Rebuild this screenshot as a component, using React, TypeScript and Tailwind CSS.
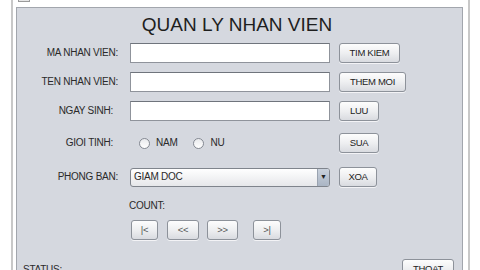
import React from "react";

const btn =
  "h-[20px] flex items-center justify-center rounded-[3px] border border-[#8d929a] bg-gradient-to-b from-[#fdfdfd] via-[#eeeff1] to-[#d9dbe0] text-[9.5px] tracking-[-0.3px] text-[#222] shadow-[0_1px_0_rgba(255,255,255,0.7)]";

const field =
  "w-[200px] h-[20px] bg-white border border-[#8f939b] border-t-[#6f747c]";

const txt = "text-[10px] tracking-[-0.25px] text-[#2a2a2a] leading-[12px]";

function Radio({ text }: { text: string }) {
  return (
    <div className="flex items-center">
      <div className="w-[11px] h-[11px] rounded-full border border-[#858a93] bg-gradient-to-b from-[#e9eaed] to-[#ffffff]" />
      <span className={`ml-[6px] ${txt}`}>{text}</span>
    </div>
  );
}

export default function App() {
  return (
    <div className="w-[480px] h-[270px] bg-white flex overflow-hidden font-['Liberation_Sans',Arial,sans-serif]">
      <div className="w-[11px] shrink-0" />
      <div className="w-[2px] shrink-0 bg-[#c8c8c8]" />
      <div className="w-[3px] shrink-0" />
      <div className="w-[447px] shrink-0 flex flex-col">
        <div className="h-[7px] shrink-0">
          <div className="ml-[2px] w-[12px] h-[2px] border border-t-0 border-[#9a9a9a] bg-[#e6e6e6]" />
        </div>
        <div className="flex-1 border border-[#a2a6ad] bg-[#d5d8df] flex flex-col">
          <div className="mt-[6px] h-[22px] leading-[22px] text-center text-[19px] text-[#1e1e1e] pr-[5px]">
            QUAN LY NHAN VIEN
          </div>

          <div className="mt-[7px] flex items-center h-[20px]">
            <div className={`w-[113px] pr-[12px] text-right ${txt}`}>MA NHAN VIEN:</div>
            <div className={field} />
            <div className={`ml-[9px] w-[61px] ${btn}`}>TIM KIEM</div>
          </div>

          <div className="mt-[9px] flex items-center h-[20px]">
            <div className={`w-[113px] pr-[12px] text-right ${txt}`}>TEN NHAN VIEN:</div>
            <div className={field} />
            <div className={`ml-[9px] w-[67px] ${btn}`}>THEM MOI</div>
          </div>

          <div className="mt-[9px] flex items-center h-[20px]">
            <div className={`w-[113px] pr-[17px] text-right ${txt}`}>NGAY SINH:</div>
            <div className={field} />
            <div className={`ml-[9px] w-[40px] ${btn}`}>LUU</div>
          </div>

          <div className="mt-[12px] flex items-center h-[20px]">
            <div className={`w-[113px] pr-[17px] text-right ${txt}`}>GIOI TINH:</div>
            <div className="w-[200px] flex items-center pl-[9px] gap-[16px]">
              <Radio text="NAM" />
              <Radio text="NU" />
            </div>
            <div className={`ml-[9px] w-[40px] ${btn}`}>SUA</div>
          </div>

          <div className="mt-[14px] flex items-center h-[20px]">
            <div className={`w-[113px] pr-[12px] text-right ${txt}`}>PHONG BAN:</div>
            <div className="w-[200px] h-[19px] flex rounded-[3px] border border-[#7f848c] bg-gradient-to-b from-[#ffffff] to-[#e6e7ea] overflow-hidden">
              <div className={`flex-1 flex items-center pl-[3px] ${txt}`}>GIAM DOC</div>
              <div className="w-[12px] flex items-center justify-center border-l border-[#9aa3b0] bg-gradient-to-b from-[#c9d1dc] to-[#aab5c4] text-[7px] text-[#222]">
                ▼
              </div>
            </div>
            <div className={`ml-[9px] w-[38px] ${btn}`}>XOA</div>
          </div>

          <div className={`mt-[13px] ml-[112px] ${txt}`}>COUNT:</div>

          <div className="mt-[8px] ml-[114px] flex items-center">
            <div className={`w-[27px] ${btn} text-[#555]`}>|&lt;</div>
            <div className={`ml-[9px] w-[32px] ${btn} text-[#555]`}>&lt;&lt;</div>
            <div className={`ml-[8px] w-[31px] ${btn} text-[#555]`}>&gt;&gt;</div>
            <div className={`ml-[15px] w-[28px] ${btn} text-[#555]`}>&gt;|</div>
          </div>

          <div className="mt-[19px] flex items-start justify-between pl-[6px] pr-[8px]">
            <div className={`mt-[5px] ${txt}`}>STATUS:</div>
            <div className={`w-[52px] ${btn}`}>THOAT</div>
          </div>
        </div>
      </div>
      <div className="w-[5px] shrink-0" />
      <div className="w-[2px] shrink-0 bg-[#c8c8c8]" />
    </div>
  );
}
